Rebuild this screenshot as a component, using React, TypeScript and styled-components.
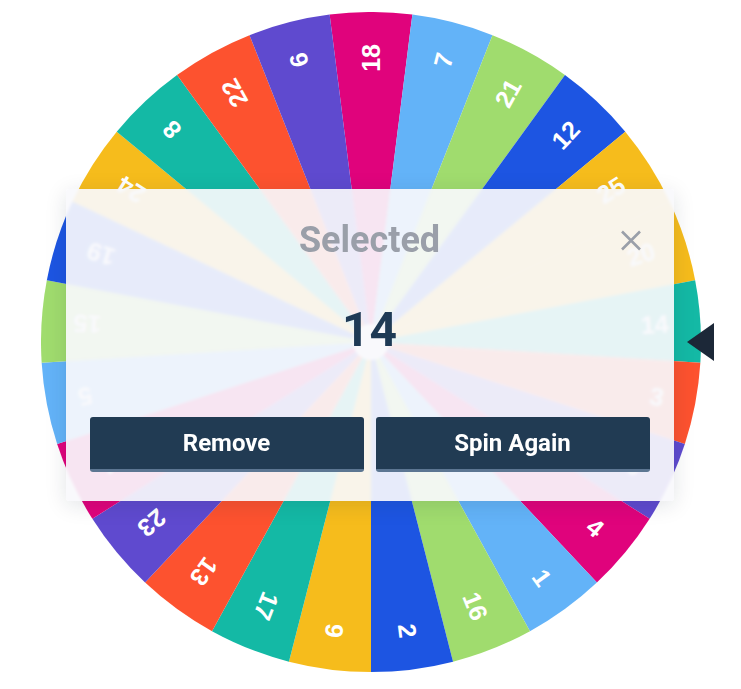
import React from 'react';
import styled, { createGlobalStyle } from 'styled-components';

const GlobalStyle = createGlobalStyle`
  html, body {
    margin: 0;
    padding: 0;
    background: #ffffff;
  }
  body {
    font-family: Roboto, "Liberation Sans", Arial, sans-serif;
  }
`;

const LABELS = [18, 7, 21, 12, 25, 20, 14, 3, 10, 4, 1, 16, 2, 9, 17, 13, 23, 11, 5, 15, 19, 24, 8, 22, 6];
const PALETTE = ['#f6bc1c', '#14b9a5', '#fd522f', '#5f4acf', '#e0037c', '#63b3f8', '#a0dc6e', '#1d55e2'];

const SIZE = 660;
const C = SIZE / 2;
const R = SIZE / 2;
const STEP = 360 / LABELS.length;

const Page = styled.div`
  display: flex;
  justify-content: center;
  padding-top: 12px;
`;

const Stage = styled.div`
  position: relative;
  width: ${SIZE}px;
  height: ${SIZE}px;
`;

const WheelSvg = styled.svg`
  display: block;
  width: ${SIZE}px;
  height: ${SIZE}px;
`;

const SliceLabel = styled.text`
  font-family: "Liberation Sans", Arial, sans-serif;
  font-weight: 700;
  font-size: 25px;
  fill: #ffffff;
`;

const Pointer = styled.div`
  position: absolute;
  top: 50%;
  right: -13px;
  transform: translateY(-50%);
  width: 0;
  height: 0;
  border-top: 19px solid transparent;
  border-bottom: 19px solid transparent;
  border-right: 27px solid #1c2838;
`;

const Modal = styled.div`
  position: absolute;
  left: 25px;
  top: 177px;
  width: 608px;
  box-sizing: border-box;
  padding: 24px 24px 29px;
  background: rgba(248, 249, 252, 0.92);
  backdrop-filter: blur(1.5px);
  border-radius: 3px;
  box-shadow: 0 4px 22px rgba(20, 30, 50, 0.12);
  display: flex;
  flex-direction: column;
`;

const Header = styled.div`
  position: relative;
  height: 54px;
  display: flex;
  align-items: center;
  justify-content: center;
`;

const Title = styled.h2`
  margin: 0;
  font-size: 36px;
  line-height: 54px;
  font-weight: 700;
  color: #9a9fa9;
`;

const CloseButton = styled.button`
  position: absolute;
  right: 0;
  top: 50%;
  transform: translateY(-50%);
  width: 37px;
  height: 37px;
  padding: 0;
  border: none;
  background: transparent;
  display: flex;
  align-items: center;
  justify-content: center;
  cursor: pointer;
`;

const Result = styled.div`
  margin-top: 39px;
  text-align: center;
  font-size: 48px;
  line-height: 48px;
  font-weight: 700;
  color: #1e3a55;
`;

const Actions = styled.div`
  margin-top: 63px;
  display: grid;
  grid-template-columns: 1fr 1fr;
  gap: 12px;
`;

const ActionButton = styled.button`
  height: 55px;
  border: none;
  border-bottom: 3px solid #5c7692;
  border-radius: 3px;
  background: #213b53;
  color: #ffffff;
  font-family: Roboto, "Liberation Sans", Arial, sans-serif;
  font-size: 24px;
  font-weight: 700;
  cursor: pointer;
`;

const pt = (deg: number, r: number) => {
  const a = (deg * Math.PI) / 180;
  return [C + r * Math.sin(a), C - r * Math.cos(a)];
};

const slicePath = (i: number) => {
  const [x1, y1] = pt((i - 0.5) * STEP, R);
  const [x2, y2] = pt((i + 0.5) * STEP, R);
  return `M ${C} ${C} L ${x1} ${y1} A ${R} ${R} 0 0 1 ${x2} ${y2} Z`;
};

const Wheel = () => (
  <WheelSvg viewBox={`0 0 ${SIZE} ${SIZE}`}>
    {LABELS.map((n, i) => {
      const k = (i - 5 + LABELS.length) % LABELS.length;
      return <path key={`s${n}`} d={slicePath(i)} fill={PALETTE[k % PALETTE.length]} />;
    })}
    {LABELS.map((n, i) => (
      <SliceLabel
        key={`t${n}`}
        x={C + 298}
        y={C}
        textAnchor="end"
        dominantBaseline="central"
        transform={`rotate(${i * STEP - 90} ${C} ${C})`}
      >
        {n}
      </SliceLabel>
    ))}
    <circle cx={C} cy={C} r={18} fill="#ffffff" />
  </WheelSvg>
);

const App = () => {
  return (
    <>
      <GlobalStyle />
      <Page>
        <Stage>
          <Wheel />
          <Pointer />
          <Modal>
            <Header>
              <Title>Selected</Title>
              <CloseButton aria-label="Close">
                <svg width="22" height="22" viewBox="0 0 22 22">
                  <path d="M2 2 L20 20 M20 2 L2 20" stroke="#9a9fa9" strokeWidth="2.6" strokeLinecap="butt" />
                </svg>
              </CloseButton>
            </Header>
            <Result>14</Result>
            <Actions>
              <ActionButton>Remove</ActionButton>
              <ActionButton>Spin Again</ActionButton>
            </Actions>
          </Modal>
        </Stage>
      </Page>
    </>
  );
};

export default App;
